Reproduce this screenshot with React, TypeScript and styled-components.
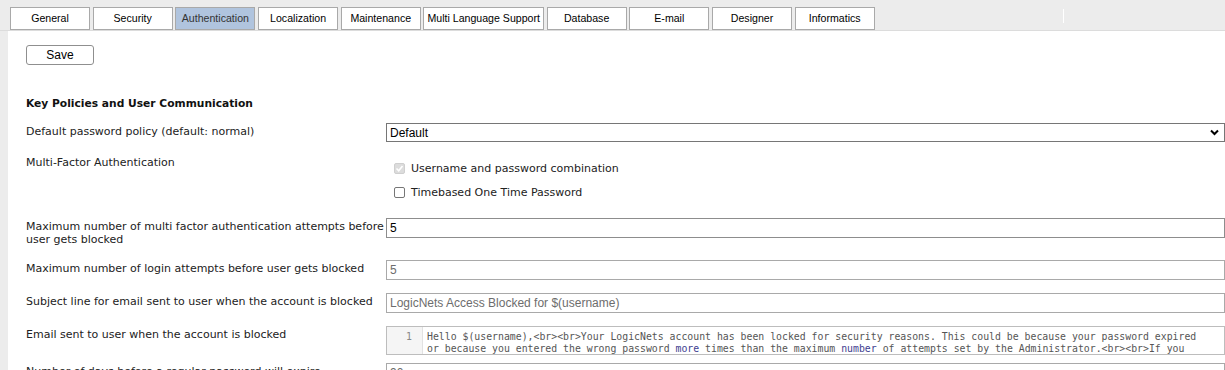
import styled, { createGlobalStyle, css } from "styled-components";

const GlobalStyle = createGlobalStyle`
    html, body {
        margin: 0;
        padding: 0;
        background-color: #ececec;
        overflow: hidden;
    }
    * {
        box-sizing: border-box;
    }
`;

const Page = styled.div`
    width: 1225px;
    height: 370px;
    overflow: hidden;
    background-color: #ececec;
    display: flex;
    flex-direction: column;
`;

const TabBar = styled.div`
    position: relative;
    display: flex;
    gap: 2.7px;
    padding: 7px 0 0 10px;
    height: 31px;
    border-bottom: 1px solid #dcdcdc;
`;

const Tab = styled.div<{ $active?: boolean }>`
    min-width: 80px;
    height: 23px;
    padding: 0 3px 2px;
    display: flex;
    align-items: center;
    justify-content: center;
    font-family: "Liberation Sans", Arial, sans-serif;
    font-size: 10.6px;
    color: #000;
    background-color: #fff;
    border: 1px solid #a9a9a9;
    ${p => p.$active && css`
        background-color: #b0c4de;
        color: #333;
    `}
`;

const Divider = styled.div`
    position: absolute;
    left: 1063px;
    top: 9px;
    width: 1px;
    height: 14px;
    background-color: #fff;
`;

const Content = styled.div`
    flex: 1;
    margin-left: 8px;
    background-color: #fff;
    padding: 14px 0 0 18px;
    font-family: "DejaVu Sans", Verdana, sans-serif;
    font-size: 11px;
    color: #222;
`;

const SaveButton = styled.button`
    width: 68px;
    height: 20px;
    padding: 0;
    background-color: #fff;
    border: 1px solid #8f8f8f;
    border-radius: 3px;
    font-family: "Liberation Sans", Arial, sans-serif;
    font-size: 12px;
    color: #000;
`;

const SectionTitle = styled.div`
    margin: 32px 0 13px;
    font-weight: bold;
    font-size: 10.7px;
    color: #111;
`;

const Row = styled.div<{ $gap?: number }>`
    display: grid;
    grid-template-columns: 360px 1fr;
    margin-bottom: ${p => p.$gap ?? 14}px;
`;

const Label = styled.div`
    line-height: 13px;
    padding-top: 2px;
    color: #222;
`;

const fieldBase = css`
    width: 100%;
    height: 20px;
    padding: 0 3px;
    font-family: "Liberation Sans", Arial, sans-serif;
    font-size: 12px;
    background-color: #fff;
`;

const Select = styled.div`
    ${fieldBase}
    display: flex;
    align-items: center;
    justify-content: space-between;
    border: 1px solid #767676;
    color: #000;
    height: 19px;
    padding-right: 5px;
`;

const TextInput = styled.div<{ $muted?: boolean }>`
    ${fieldBase}
    display: flex;
    align-items: center;
    border: 1px solid ${p => (p.$muted ? "#a9a9a9" : "#8d8d8d")};
    color: ${p => (p.$muted ? "#6d6d6d" : "#000")};
`;

const Checks = styled.div`
    display: flex;
    flex-direction: column;
    gap: 11px;
    padding: 8px 0 0 8px;
`;

const CheckRow = styled.label`
    display: flex;
    align-items: center;
    gap: 6px;
    color: #222;
`;

const Box = styled.span<{ $checked?: boolean }>`
    width: 11px;
    height: 11px;
    border-radius: 2px;
    border: 1px solid ${p => (p.$checked ? "#cfcfcf" : "#767676")};
    background-color: ${p => (p.$checked ? "#dcdcdc" : "#fff")};
    display: flex;
    align-items: center;
    justify-content: center;
`;

const Editor = styled.div`
    display: flex;
    height: 29px;
    border: 1px solid #bdbdbd;
    background-color: #fff;
    font-family: "DejaVu Sans Mono", monospace;
    font-size: 9.83px;
    color: #555;
    line-height: 11.5px;
`;

const Gutter = styled.div`
    width: 36px;
    flex-shrink: 0;
    background-color: #f5f5f5;
    border-right: 1px solid #e2e2e2;
    text-align: right;
    padding: 4px 10px 0 0;
    color: #888;
`;

const Code = styled.div`
    padding: 4px 0 0 4px;
    white-space: pre;
    overflow: hidden;
`;

const Keyword = styled.span`
    color: #3d3d8f;
`;

const Chevron = () => (
    <svg width="9" height="7" viewBox="0 0 9 7">
        <path d="M1 1.5 L4.5 5 L8 1.5" fill="none" stroke="#000" strokeWidth="2" />
    </svg>
);

const Tick = () => (
    <svg width="9" height="9" viewBox="0 0 9 9">
        <path d="M1.5 4.5 L3.7 6.7 L7.5 2" fill="none" stroke="#fff" strokeWidth="1.6" />
    </svg>
);

const tabs = [
    "General",
    "Security",
    "Authentication",
    "Localization",
    "Maintenance",
    "Multi Language Support",
    "Database",
    "E-mail",
    "Designer",
    "Informatics",
];

const App = () => {
    return (
        <>
            <GlobalStyle />
            <Page>
                <TabBar>
                    {tabs.map(t => (
                        <Tab key={t} $active={t === "Authentication"}>{t}</Tab>
                    ))}
                    <Divider />
                </TabBar>
                <Content>
                    <SaveButton>Save</SaveButton>
                    <SectionTitle>Key Policies and User Communication</SectionTitle>

                    <Row $gap={12}>
                        <Label>Default password policy (default: normal)</Label>
                        <Select>
                            <span>Default</span>
                            <Chevron />
                        </Select>
                    </Row>

                    <Row $gap={19}>
                        <Label>Multi-Factor Authentication</Label>
                        <Checks>
                            <CheckRow>
                                <Box $checked><Tick /></Box>
                                Username and password combination
                            </CheckRow>
                            <CheckRow>
                                <Box />
                                Timebased One Time Password
                            </CheckRow>
                        </Checks>
                    </Row>

                    <Row $gap={14}>
                        <Label>Maximum number of multi factor authentication attempts before user gets blocked</Label>
                        <TextInput>5</TextInput>
                    </Row>

                    <Row $gap={13}>
                        <Label>Maximum number of login attempts before user gets blocked</Label>
                        <TextInput $muted>5</TextInput>
                    </Row>

                    <Row $gap={13}>
                        <Label>Subject line for email sent to user when the account is blocked</Label>
                        <TextInput $muted>LogicNets Access Blocked for $(username)</TextInput>
                    </Row>

                    <Row $gap={8}>
                        <Label>Email sent to user when the account is blocked</Label>
                        <Editor>
                            <Gutter>1</Gutter>
                            <Code>
                                {"Hello $(username),<br><br>Your LogicNets account has been locked for security reasons. This could be because your password expired\n"}
                                {"or because you entered the wrong password "}<Keyword>more</Keyword>
                                {" times than the maximum "}<Keyword>number</Keyword>
                                {" of attempts set by the Administrator.<br><br>If you"}
                            </Code>
                        </Editor>
                    </Row>

                    <Row>
                        <Label>Number of days before a regular password will expire</Label>
                        <TextInput $muted>90</TextInput>
                    </Row>
                </Content>
            </Page>
        </>
    );
};

export default App;
